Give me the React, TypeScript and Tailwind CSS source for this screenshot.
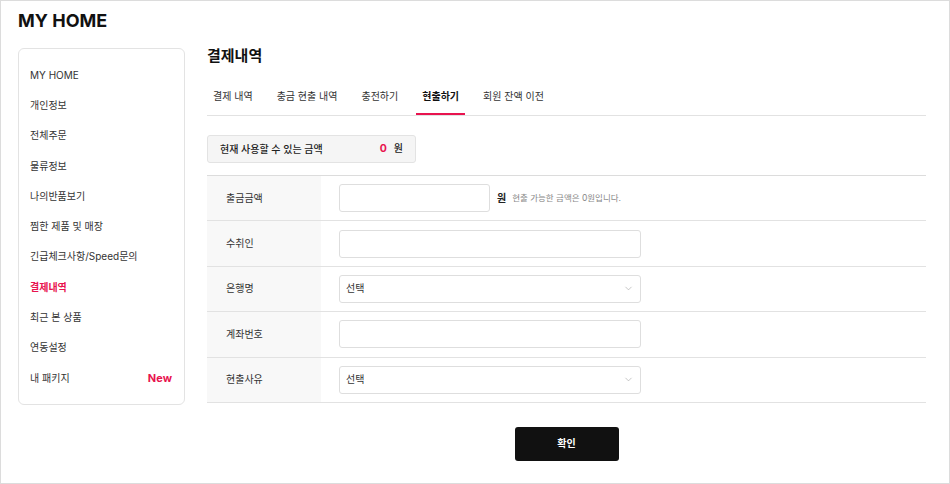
import { ChevronDown } from "lucide-react";

const font = { fontFamily: 'Inter, "Noto Sans CJK KR", sans-serif' };

const menu = [
  "MY HOME",
  "개인정보",
  "전체주문",
  "물류정보",
  "나의반품보기",
  "찜한 제품 및 매장",
  "긴급체크사항/Speed문의",
  "결제내역",
  "최근 본 상품",
  "연동설정",
  "내 패키지",
];

const tabs = ["결제 내역", "충금 현출 내역", "충전하기", "현출하기", "회원 잔액 이전"];

function Select() {
  return (
    <div className="flex h-[28px] w-[302px] items-center justify-between rounded-[3px] border border-[#dedede] bg-white pl-[6px] pr-[6px] text-[10px] text-[#333]">
      <span>선택</span>
      <ChevronDown size={11} strokeWidth={1.2} className="text-[#999]" />
    </div>
  );
}

function Row({ label, children }: { label: string; children: React.ReactNode }) {
  return (
    <div className="flex h-[45.4px] border-b border-[#e2e2e2]">
      <div className="flex w-[114px] items-center bg-[#f8f8f8] pl-[19px] text-[10px] text-[#333]">{label}</div>
      <div className="flex flex-1 items-center pl-[18px]">{children}</div>
    </div>
  );
}

export default function App() {
  return (
    <div style={font} className="h-[484px] w-[950px] overflow-hidden border border-[#dcdcdc] bg-white text-[#222]">
      <h1 className="pl-[17px] pt-[9px] text-[18px] font-bold leading-[22px] text-[#111]">MY HOME</h1>
      <div className="mt-[16px] flex gap-[22px] pl-[17px]">
        <aside className="h-[357px] w-[167px] rounded-[6px] border border-[#e3e3e3] pb-[11px] pt-[11px]">
          {menu.map((m) => (
            <div
              key={m}
              className={`flex h-[30.3px] items-center justify-between pl-[11px] pr-[12px] text-[10px] ${
                m === "결제내역" ? "font-semibold text-[#e8134f]" : "text-[#333]"
              }`}
            >
              <span>{m}</span>
              {m === "내 패키지" && <span className="text-[11px] font-bold text-[#e8134f]">New</span>}
            </div>
          ))}
        </aside>
        <main className="w-[719px]">
          <h2 className="mt-[-2px] text-[15px] font-bold leading-[20px] text-[#111]">결제내역</h2>
          <nav className="mt-[22px] flex gap-[12px] border-b border-[#e2e2e2]">
            {tabs.map((t) => (
              <div
                key={t}
                className={`flex h-[27px] items-start px-[6px] pt-[1px] text-[10px] ${
                  t === "현출하기"
                    ? "border-b-2 border-[#e8134f] font-semibold text-[#111]"
                    : "text-[#333]"
                }`}
              >
                {t}
              </div>
            ))}
          </nav>
          <div className="mt-[19px] flex h-[28px] w-[209px] items-center justify-between rounded-[3px] border border-[#e3e3e3] bg-[#f5f5f5] pl-[12px] pr-[12px] text-[10px] font-medium text-[#222]">
            <span>현재 사용할 수 있는 금액</span>
            <span className="flex gap-[7px]">
              <span className="text-[10.5px] font-bold text-[#e8134f]">0</span>
              <span>원</span>
            </span>
          </div>
          <div className="mt-[12px] border-t border-[#dcdcdc]">
            <Row label="출금금액">
              <div className="h-[28px] w-[151px] rounded-[3px] border border-[#dedede]" />
              <span className="ml-[7px] text-[10px] font-bold text-[#222]">원</span>
              <span className="ml-[6px] text-[8.5px] text-[#888]">현출 가능한 금액은 0원입니다.</span>
            </Row>
            <Row label="수취인">
              <div className="h-[28px] w-[302px] rounded-[3px] border border-[#dedede]" />
            </Row>
            <Row label="은행명">
              <Select />
            </Row>
            <Row label="계좌번호">
              <div className="h-[28px] w-[302px] rounded-[3px] border border-[#dedede]" />
            </Row>
            <Row label="현출사유">
              <Select />
            </Row>
          </div>
          <div className="mt-[24px] flex justify-center">
            <button className="h-[34px] w-[104px] rounded-[3px] bg-[#111] text-[10px] font-semibold text-white">
              확인
            </button>
          </div>
        </main>
      </div>
    </div>
  );
}
